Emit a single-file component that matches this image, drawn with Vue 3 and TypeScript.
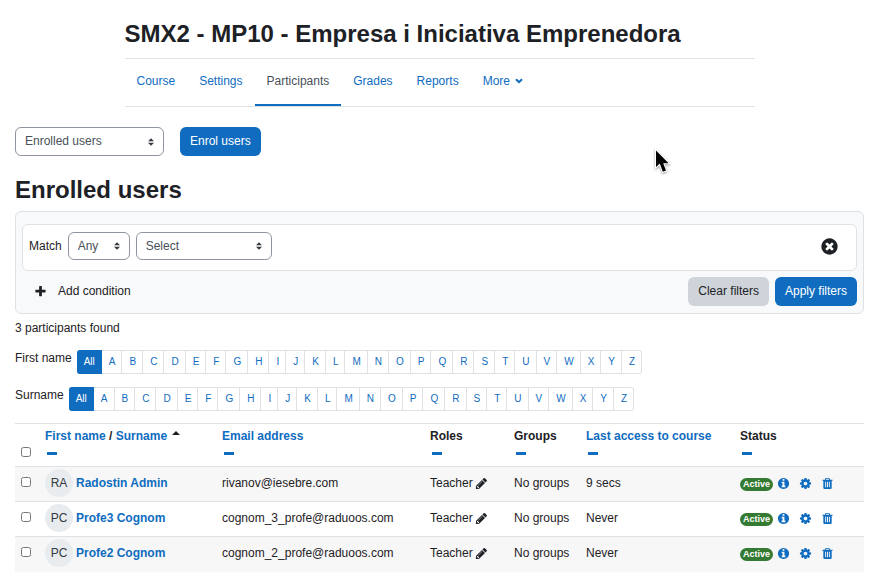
<script setup lang="ts">
import { ref } from 'vue'

interface Tab {
  label: string
  active?: boolean
}

interface Participant {
  initials: string
  name: string
  email: string
  role: string
  groups: string
  lastAccess: string
  status: string
}

const tabs: Tab[] = [
  { label: 'Course' },
  { label: 'Settings' },
  { label: 'Participants', active: true },
  { label: 'Grades' },
  { label: 'Reports' },
]

const letters: string[] = 'ABCDEFGHIJKLMNOPQRSTUVWXYZ'.split('')
const initialBars: string[] = ['First name', 'Surname']

const participants: Participant[] = [
  { initials: 'RA', name: 'Radostin Admin', email: 'rivanov@iesebre.com', role: 'Teacher', groups: 'No groups', lastAccess: '9 secs', status: 'Active' },
  { initials: 'PC', name: 'Profe3 Cognom', email: 'cognom_3_profe@raduoos.com', role: 'Teacher', groups: 'No groups', lastAccess: 'Never', status: 'Active' },
  { initials: 'PC', name: 'Profe2 Cognom', email: 'cognom_2_profe@raduoos.com', role: 'Teacher', groups: 'No groups', lastAccess: 'Never', status: 'Active' },
]

const view = ref('Enrolled users')
const match = ref('Any')
const condition = ref('Select')

const icons = {
  plus: 'M1600 736v192q0 40-28 68t-68 28h-416v416q0 40-28 68t-68 28h-192q-40 0-68-28t-28-68v-416h-416q-40 0-68-28t-28-68v-192q0-40 28-68t68-28h416v-416q0-40 28-68t68-28h192q40 0 68 28t28 68v416h416q40 0 68 28t28 68z',
  close: 'M1277 1122q0-26-19-45l-181-181 181-181q19-19 19-45 0-27-19-46l-90-90q-19-19-46-19-26 0-45 19l-181 181-181-181q-19-19-45-19-27 0-46 19l-90 90q-19 19-19 46 0 26 19 45l181 181-181 181q-19 19-19 45 0 27 19 46l90 90q19 19 46 19 26 0 45-19l181-181 181 181q19 19 45 19 27 0 46-19l90-90q19-19 19-46zm387-226q0 209-103 385.5t-279.5 279.5-385.5 103-385.5-103-279.5-279.5-103-385.5 103-385.5 279.5-279.5 385.5-103 385.5 103 279.5 279.5 103 385.5z',
  info: 'M1152 1376v-160q0-14-9-23t-23-9h-96v-512q0-14-9-23t-23-9h-320q-14 0-23 9t-9 23v160q0 14 9 23t23 9h96v320h-96q-14 0-23 9t-9 23v160q0 14 9 23t23 9h448q14 0 23-9t9-23zm-128-896v-160q0-14-9-23t-23-9h-192q-14 0-23 9t-9 23v160q0 14 9 23t23 9h192q14 0 23-9t9-23zm640 416q0 209-103 385.5t-279.5 279.5-385.5 103-385.5-103-279.5-279.5-103-385.5 103-385.5 279.5-279.5 385.5-103 385.5 103 279.5 279.5 103 385.5z',
  cog: 'M1152 896q0-106-75-181t-181-75-181 75-75 181 75 181 181 75 181-75 75-181zm512-109v222q0 12-8 23t-20 13l-185 28q-19 54-39 91 35 50 107 138 10 12 10 25t-9 23q-27 37-99 108t-94 71q-12 0-26-9l-138-108q-44 23-91 38-16 136-29 186-7 28-36 28h-222q-14 0-24.5-8.5t-11.5-21.5l-28-184q-49-16-90-37l-141 107q-10 9-25 9-14 0-25-11-126-114-165-168-7-10-7-23 0-12 8-23 15-21 51-66.5t54-70.5q-27-50-41-99l-183-27q-13-2-21-12.5t-8-23.5v-222q0-12 8-23t19-13l186-28q14-46 39-92-40-57-107-138-10-12-10-24 0-10 9-23 26-36 98.5-107.5t94.5-71.5q13 0 26 10l138 107q44-23 91-38 16-136 29-186 7-28 36-28h222q14 0 24.5 8.5t11.5 21.5l28 184q49 16 90 37l142-107q9-9 24-9 13 0 25 10 129 119 165 170 7 8 7 22 0 12-8 23-15 21-51 66.5t-54 70.5q26 50 41 98l183 28q13 2 21 12.5t8 23.5z',
  trash: 'M704 1376v-704q0-14-9-23t-23-9h-64q-14 0-23 9t-9 23v704q0 14 9 23t23 9h64q14 0 23-9t9-23zm256 0v-704q0-14-9-23t-23-9h-64q-14 0-23 9t-9 23v704q0 14 9 23t23 9h64q14 0 23-9t9-23zm256 0v-704q0-14-9-23t-23-9h-64q-14 0-23 9t-9 23v704q0 14 9 23t23 9h64q14 0 23-9t9-23zm-544-992h448l-48-117q-7-9-17-11h-317q-10 2-17 11zm928 32v64q0 14-9 23t-23 9h-96v948q0 83-47 143.5t-113 60.5h-832q-66 0-113-58.5t-47-141.5v-952h-96q-14 0-23-9t-9-23v-64q0-14 9-23t23-9h309l70-167q15-37 54-63t79-26h320q40 0 79 26t54 63l70 167h309q14 0 23 9t9 23z',
  pencil: 'M491 1536l91-91-235-235-91 91v107h128v128h107zm523-928q0-22-22-22-10 0-17 7l-542 542q-7 7-7 17 0 22 22 22 10 0 17-7l542-542q7-7 7-17zm-54-192l416 416-832 832h-416v-416zm683 96q0 53-37 90l-166 166-416-416 166-165q36-38 90-38 53 0 91 38l235 234q37 39 37 91z',
}
</script>

<template>
  <div class="page">
    <header class="course-header">
      <h1>SMX2 - MP10 - Empresa i Iniciativa Emprenedora</h1>
      <nav class="tabs" aria-label="Course">
        <a v-for="tab in tabs" :key="tab.label" href="#" class="tab" :class="{ active: tab.active }">{{ tab.label }}</a>
        <a href="#" class="tab">More
          <svg class="chevron" viewBox="0 0 8 6" aria-hidden="true"><path d="M1 1.2 4 4.2 7 1.2" /></svg>
        </a>
      </nav>
    </header>

    <main>
      <div class="actions">
        <div class="select view-select">
          <select v-model="view" aria-label="Participants navigation">
            <option>Enrolled users</option>
          </select>
          <svg viewBox="0 0 4 5" aria-hidden="true"><path d="M2 0 0 2h4zm0 5L0 3h4z" /></svg>
        </div>
        <button type="button" class="btn primary">Enrol users</button>
      </div>

      <h2>Enrolled users</h2>

      <section class="filters" aria-label="Filters">
        <div class="filter-row">
          <label for="match">Match</label>
          <div class="select match-select">
            <select id="match" v-model="match">
              <option>Any</option>
            </select>
            <svg viewBox="0 0 4 5" aria-hidden="true"><path d="M2 0 0 2h4zm0 5L0 3h4z" /></svg>
          </div>
          <div class="select condition-select">
            <select v-model="condition" aria-label="Filter type">
              <option>Select</option>
            </select>
            <svg viewBox="0 0 4 5" aria-hidden="true"><path d="M2 0 0 2h4zm0 5L0 3h4z" /></svg>
          </div>
          <button type="button" class="icon-btn remove" aria-label="Remove filter row">
            <svg viewBox="0 0 1792 1792"><path :d="icons.close" /></svg>
          </button>
        </div>
        <div class="filter-actions">
          <button type="button" class="add">
            <svg viewBox="0 0 1792 1792" aria-hidden="true"><path :d="icons.plus" /></svg>
            <span>Add condition</span>
          </button>
          <button type="button" class="btn secondary">Clear filters</button>
          <button type="button" class="btn primary">Apply filters</button>
        </div>
      </section>

      <p class="count">3 participants found</p>

      <nav v-for="bar in initialBars" :key="bar" class="initials" :aria-label="bar">
        <span class="initials-label">{{ bar }}</span>
        <ul>
          <li class="all"><a href="#">All</a></li>
          <li v-for="letter in letters" :key="letter"><a href="#">{{ letter }}</a></li>
        </ul>
      </nav>

      <table>
        <colgroup>
          <col class="col-check" />
          <col class="col-name" />
          <col class="col-email" />
          <col class="col-roles" />
          <col class="col-groups" />
          <col class="col-access" />
          <col class="col-status" />
        </colgroup>
        <thead>
          <tr>
            <th class="check"><input type="checkbox" aria-label="Select all" /></th>
            <th>
              <div class="heading">
                <span><a href="#">First name</a> / <a href="#">Surname</a></span>
                <svg class="sort" viewBox="0 0 8 4" aria-hidden="true"><path d="M4 0 8 4H0z" /></svg>
              </div>
              <a href="#" class="hide" aria-label="Hide name"></a>
            </th>
            <th><div class="heading"><a href="#">Email address</a></div><a href="#" class="hide" aria-label="Hide email"></a></th>
            <th><div class="heading">Roles</div><a href="#" class="hide" aria-label="Hide roles"></a></th>
            <th><div class="heading">Groups</div><a href="#" class="hide" aria-label="Hide groups"></a></th>
            <th><div class="heading"><a href="#">Last access to course</a></div><a href="#" class="hide" aria-label="Hide last access"></a></th>
            <th><div class="heading">Status</div><a href="#" class="hide" aria-label="Hide status"></a></th>
          </tr>
        </thead>
        <tbody>
          <tr v-for="person in participants" :key="person.name">
            <td class="check"><input type="checkbox" :aria-label="'Select ' + person.name" /></td>
            <td>
              <a href="#" class="person"><span class="avatar">{{ person.initials }}</span>{{ person.name }}</a>
            </td>
            <td>{{ person.email }}</td>
            <td>
              <div class="role">
                {{ person.role }}
                <button type="button" class="icon-btn dark" aria-label="Edit role">
                  <svg viewBox="0 0 1792 1792"><path :d="icons.pencil" /></svg>
                </button>
              </div>
            </td>
            <td>{{ person.groups }}</td>
            <td>{{ person.lastAccess }}</td>
            <td>
              <div class="status">
                <span class="badge">{{ person.status }}</span>
                <div class="status-icons">
                  <button type="button" class="icon-btn" aria-label="Details"><svg viewBox="0 0 1792 1792"><path :d="icons.info" /></svg></button>
                  <button type="button" class="icon-btn" aria-label="Edit enrolment"><svg viewBox="0 0 1792 1792"><path :d="icons.cog" /></svg></button>
                  <button type="button" class="icon-btn" aria-label="Unenrol"><svg viewBox="0 0 1792 1792"><path :d="icons.trash" /></svg></button>
                </div>
              </div>
            </td>
          </tr>
        </tbody>
      </table>
    </main>

    <svg class="pointer" viewBox="0 0 20 28" aria-hidden="true">
      <path d="M3 3.5V20L6.8 16.6 9.8 24.8 13 23.4 10.2 16.2H15.6Z" />
    </svg>
  </div>
</template>

<style>
body {
  margin: 0;
  background: #fff;
}
</style>

<style scoped>
.page {
  position: relative;
  padding: 16px 18px 10px 15px;
  color: #1d2125;
  font: 12px/18px "Liberation Sans", Arial, sans-serif;
}

a {
  color: #0f6cbf;
  text-decoration: none;
}

h1,
h2 {
  margin: 0;
  font-size: 24px;
  line-height: 28px;
  font-weight: 700;
}

button,
select {
  font: inherit;
  cursor: pointer;
}

.course-header {
  max-width: 630px;
  margin: 0 auto;
}

.course-header h1 {
  padding: 4px 0 10px;
  white-space: nowrap;
}

.tabs {
  display: flex;
  height: 47px;
  border-top: 1px solid #dee2e6;
  border-bottom: 1px solid #dee2e6;
}

.tab {
  display: flex;
  align-items: center;
  gap: 5px;
  padding: 0 12px 1px;
  border-bottom: 2px solid transparent;
}

.tab.active {
  color: #495057;
  border-bottom-color: #0f6cbf;
}

.chevron {
  width: 8px;
  height: 6px;
  fill: none;
  stroke: #0f6cbf;
  stroke-width: 2;
}

.actions {
  display: flex;
  gap: 16px;
  margin: 20px 0;
}

.select {
  display: grid;
  align-items: center;
  height: 28px;
}

.select select,
.select svg {
  grid-area: 1 / 1;
}

.select select {
  appearance: none;
  width: 100%;
  height: 100%;
  padding: 0 20px 1px 9px;
  border: 1px solid #8f959e;
  border-radius: 6px;
  background: #fff;
  color: #495057;
}

.select svg {
  justify-self: end;
  width: 6px;
  height: 8px;
  margin-right: 10px;
  fill: #343a40;
  pointer-events: none;
}

.view-select {
  width: 149px;
  height: 29px;
}

.match-select {
  width: 62px;
}

.condition-select {
  width: 136px;
}

.btn {
  height: 29px;
  padding: 0 10px 1px;
  border: 0;
  border-radius: 6px;
  white-space: nowrap;
}

.primary {
  background: #0f6cbf;
  color: #fff;
}

.secondary {
  background: #ced4da;
  color: #1d2125;
}

.filters {
  margin-top: 7px;
  padding: 12px 6px 7px;
  border: 1px solid #dee2e6;
  border-radius: 6px;
  background: #f8f9fa;
}

.filter-row {
  display: flex;
  align-items: center;
  gap: 6px;
  padding: 7px 17px 10px 6px;
  border: 1px solid #dee2e6;
  border-radius: 6px;
  background: #fff;
}

.icon-btn {
  display: flex;
  padding: 0;
  border: 0;
  background: none;
}

.icon-btn svg {
  width: 13px;
  height: 13px;
  fill: #0f6cbf;
}

.dark svg {
  fill: #1d2125;
}

.remove {
  margin-left: auto;
}

.remove svg {
  width: 19px;
  height: 19px;
  fill: #1d2125;
}

.filter-actions {
  display: flex;
  gap: 6px;
  margin-top: 6px;
}

.add {
  display: flex;
  align-items: center;
  gap: 11px;
  margin-right: auto;
  padding: 0 12px 1px;
  border: 0;
  background: none;
  color: #1d2125;
}

.add svg {
  width: 13px;
  height: 13px;
  fill: #1d2125;
}

.count {
  margin: 5px 0 13px;
}

.initials {
  display: flex;
  align-items: flex-start;
  gap: 5px;
}

.initials + .initials {
  margin-top: 13px;
}

.initials-label {
  line-height: 16px;
}

.initials ul {
  display: flex;
  margin: 0;
  padding: 0;
  list-style: none;
}

.initials a {
  display: block;
  padding: 0 6px 0 7px;
  border: 1px solid #dee2e6;
  border-left: 0;
  background: #fff;
  font-size: 10px;
  line-height: 22px;
}

.initials .all a {
  border-color: #0f6cbf;
  border-radius: 3px 0 0 3px;
  background: #0f6cbf;
  color: #fff;
}

.initials li:last-child a {
  border-radius: 0 3px 3px 0;
}

table {
  width: 100%;
  margin-top: 12px;
  table-layout: fixed;
  border-collapse: collapse;
}

.col-check {
  width: 21px;
}

.col-name {
  width: 177px;
}

.col-roles {
  width: 84px;
}

.col-groups {
  width: 72px;
}

.col-access {
  width: 154px;
}

.col-status {
  width: 133px;
}

th,
td {
  box-sizing: border-box;
  padding: 0 0 0 9px;
  border-top: 1px solid #dee2e6;
  text-align: left;
  white-space: nowrap;
}

th {
  height: 43px;
  padding-top: 3px;
  vertical-align: top;
}

td {
  height: 35px;
  padding-bottom: 2px;
}

tbody tr:nth-child(odd) {
  background: #f7f7f7;
}

.check {
  padding-left: 6px;
}

th.check {
  padding-bottom: 9px;
  vertical-align: bottom;
}

.check input {
  display: block;
  width: 10px;
  height: 10px;
  margin: 0;
}

td.check input {
  margin-bottom: 2px;
}

.heading {
  display: flex;
  gap: 5px;
}

.sort {
  width: 8px;
  height: 4px;
  margin-top: 4px;
  fill: #1d2125;
}

.hide {
  display: block;
  width: 10px;
  height: 3px;
  margin: 7px 0 0 2px;
  background: #0f6cbf;
}

.person {
  display: flex;
  align-items: center;
  gap: 3px;
  font-weight: 700;
}

.avatar {
  width: 28px;
  border-radius: 50%;
  background: #e9ecef;
  color: #343a40;
  font-weight: 400;
  line-height: 28px;
  text-align: center;
}

.role {
  display: flex;
  align-items: center;
  gap: 2px;
}

.status {
  display: flex;
  align-items: center;
  gap: 4px;
}

.status-icons {
  display: flex;
  gap: 9px;
}

.badge {
  margin-top: 2px;
  padding: 0 3px;
  border-radius: 7px;
  background: #357a32;
  color: #fff;
  font-size: 9px;
  font-weight: 700;
  line-height: 13px;
}

.pointer {
  position: absolute;
  top: 147px;
  left: 653px;
  width: 20px;
  height: 28px;
  fill: #000;
  stroke: #fff;
  stroke-width: 2;
  paint-order: stroke;
  filter: drop-shadow(0 1px 1px rgb(0 0 0 / 40%));
}
</style>
